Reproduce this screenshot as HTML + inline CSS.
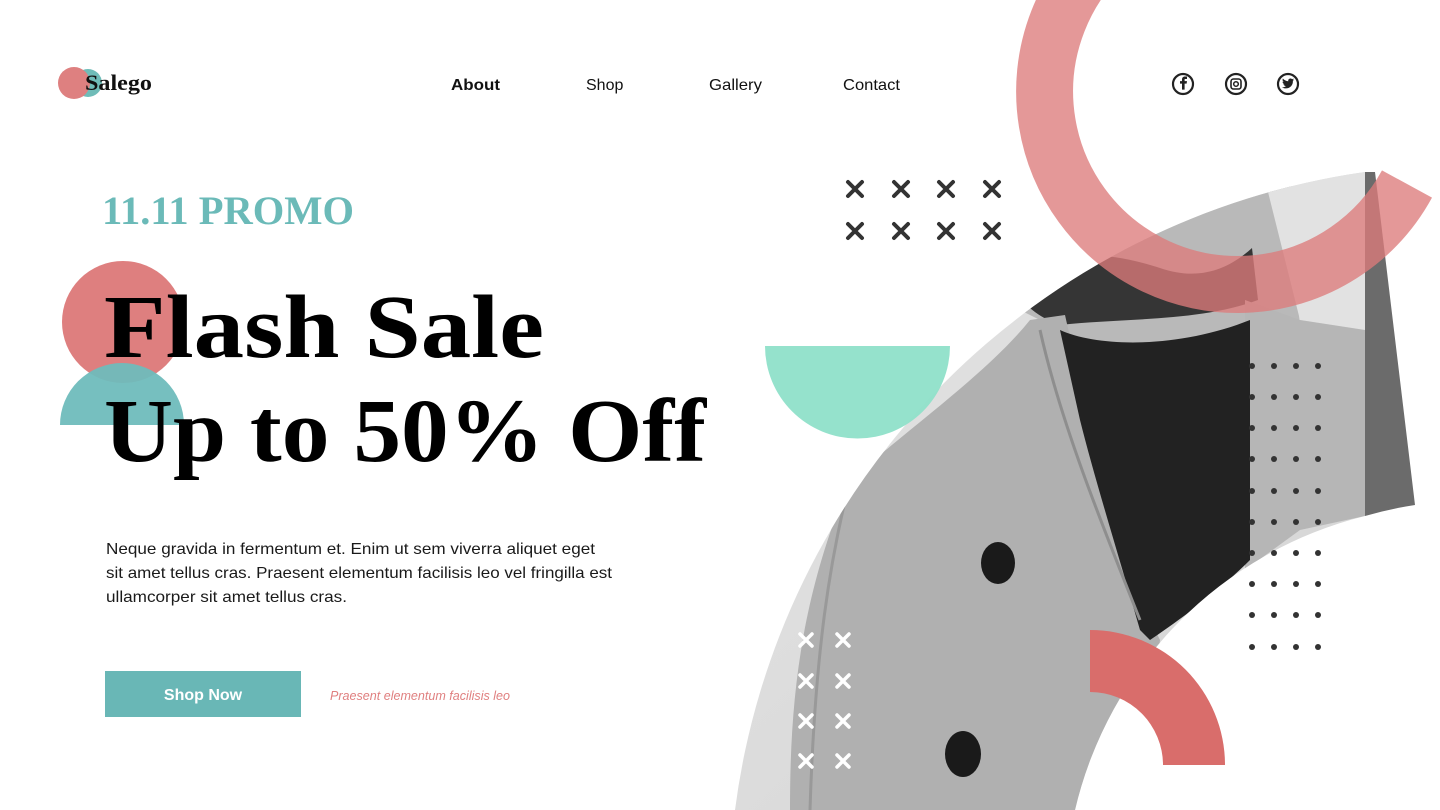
<!DOCTYPE html>
<html><head><meta charset="utf-8"><style>
html,body{margin:0;padding:0;background:#fff;}
body{width:1440px;height:810px;overflow:hidden;position:relative;font-family:"Liberation Sans",sans-serif;}
svg{position:absolute;left:0;top:0;}
</style></head><body>
<svg width="1440" height="810" viewBox="0 0 1440 810" xmlns="http://www.w3.org/2000/svg">
<defs>
<clipPath id="ph"><path d="M735,810 A740,740 0 0 1 1365,172 L1365,516 A396,396 0 0 0 1075,810 Z"/></clipPath>
<linearGradient id="bg" x1="0" y1="0" x2="1" y2="1"><stop offset="0" stop-color="#e6e6e6"/><stop offset="1" stop-color="#d2d2d2"/></linearGradient>
</defs>

<!-- photo -->
<g clip-path="url(#ph)">
<rect x="700" y="160" width="700" height="660" fill="url(#bg)"/>
<!-- face/skin -->
<path d="M960,160 L1290,160 L1300,330 L1240,360 L1100,350 L1000,300 Z" fill="#b9b9b9"/>
<path d="M1260,160 L1365,160 L1365,330 L1300,320 Z" fill="#e2e2e2"/>
<!-- beard -->
<path d="M1012,285 C1040,255 1090,245 1160,268 C1200,282 1230,268 1252,248 L1258,300 C1200,322 1120,318 1060,325 C1040,318 1022,305 1012,285 Z" fill="#353535"/>
<!-- coat -->
<path d="M790,810 C790,700 800,600 850,480 C920,420 990,370 1030,320 L1065,315 L1100,470 L1145,610 L1160,640 L1140,810 Z" fill="#b0b0b0"/>
<path d="M1245,300 L1300,320 L1365,330 L1365,516 L1300,530 L1245,570 Z" fill="#b6b6b6"/>
<!-- turtleneck -->
<path d="M1060,330 C1100,348 1180,348 1250,320 L1250,560 C1220,590 1180,620 1150,640 L1140,630 C1120,560 1095,480 1080,420 Z" fill="#222"/>
<!-- coat seams -->
<path d="M850,480 C830,560 815,650 810,810" stroke="#999" stroke-width="3" fill="none"/>
<path d="M1040,330 C1060,420 1100,520 1140,620" stroke="#8e8e8e" stroke-width="3" fill="none"/>
<!-- buttons -->
<ellipse cx="998" cy="563" rx="17" ry="21" fill="#1a1a1a"/>
<ellipse cx="963" cy="754" rx="18" ry="23" fill="#1a1a1a"/>
</g>
<!-- gray bar -->
<path d="M1365,172 L1375,172 L1415,505 A396,396 0 0 0 1365,516 Z" fill="#6b6b6b"/>

<!-- teal half circle -->
<path d="M765,346 L950,346 A92.5,92.5 0 0 1 765,346 Z" fill="#8fe0c9" opacity="0.95"/>

<!-- pink ring -->
<path d="M1201,-98 A193,193 0 1 0 1407,184" stroke="#dc7b7b" stroke-opacity="0.78" stroke-width="57" fill="none"/>

<!-- red quarter ring -->
<path d="M1090,630 A135,135 0 0 1 1225,765 L1163,765 A73,73 0 0 0 1090,692 Z" fill="#d96d6b"/>

<!-- dark X marks -->
<g stroke="#333" stroke-width="4" stroke-linecap="round">
<path d="M848,182 l14,14 m0,-14 l-14,14"/><path d="M894,182 l14,14 m0,-14 l-14,14"/><path d="M939,182 l14,14 m0,-14 l-14,14"/><path d="M985,182 l14,14 m0,-14 l-14,14"/>
<path d="M848,224 l14,14 m0,-14 l-14,14"/><path d="M894,224 l14,14 m0,-14 l-14,14"/><path d="M939,224 l14,14 m0,-14 l-14,14"/><path d="M985,224 l14,14 m0,-14 l-14,14"/>
</g>
<!-- white X marks -->
<g stroke="#fff" stroke-width="3.5" stroke-linecap="round">
<path d="M800,634 l12,12 m0,-12 l-12,12"/><path d="M837,634 l12,12 m0,-12 l-12,12"/>
<path d="M800,675 l12,12 m0,-12 l-12,12"/><path d="M837,675 l12,12 m0,-12 l-12,12"/>
<path d="M800,715 l12,12 m0,-12 l-12,12"/><path d="M837,715 l12,12 m0,-12 l-12,12"/>
<path d="M800,755 l12,12 m0,-12 l-12,12"/><path d="M837,755 l12,12 m0,-12 l-12,12"/>
</g>
<!-- dots -->
<g fill="#333">
<g id="dr"><circle cx="1252" cy="366" r="3"/><circle cx="1274" cy="366" r="3"/><circle cx="1296" cy="366" r="3"/><circle cx="1318" cy="366" r="3"/></g>
<use href="#dr" y="31"/><use href="#dr" y="62"/><use href="#dr" y="93"/><use href="#dr" y="125"/><use href="#dr" y="156"/><use href="#dr" y="187"/><use href="#dr" y="218"/><use href="#dr" y="249"/><use href="#dr" y="281"/>
</g>

<!-- logo -->
<circle cx="88" cy="83" r="14" fill="#6fbcb8"/>
<circle cx="74" cy="83" r="16" fill="#de8080"/>
<text x="85" y="90" font-family="Liberation Serif, serif" font-weight="bold" font-size="22" fill="#111" textLength="67" lengthAdjust="spacingAndGlyphs">Salego</text>

<!-- nav -->
<g font-family="Liberation Sans, sans-serif" font-size="16" fill="#111">
<text x="451" y="90" font-weight="bold" textLength="49" lengthAdjust="spacingAndGlyphs">About</text>
<text x="586" y="90">Shop</text>
<text x="709" y="90" textLength="53" lengthAdjust="spacingAndGlyphs">Gallery</text>
<text x="843" y="90" textLength="57" lengthAdjust="spacingAndGlyphs">Contact</text>
</g>
<!-- social icons -->
<g fill="none" stroke="#222" stroke-width="2.2">
<circle cx="1183" cy="84" r="10"/>
<circle cx="1236" cy="84" r="10"/>
<circle cx="1288" cy="84" r="10"/>
<rect x="1231" y="79" width="10" height="10" rx="2.5" stroke-width="1.6"/>
<circle cx="1236" cy="84" r="2.3" stroke-width="1.5"/>
</g>
<path d="M1185,79 h2 v-2.5 h-2 c-2,0 -3,1.2 -3,3 v1.6 h-2 v2.5 h2 v6 h2.6 v-6 h2 l0.4,-2.5 h-2.4 v-1.3 c0,-0.6 0.2,-0.8 0.4,-0.8z" fill="#222"/>
<path d="M1294,79.5 c-0.5,0.2 -1,0.4 -1.5,0.4 c0.6,-0.3 1,-0.8 1.2,-1.4 c-0.5,0.3 -1.1,0.5 -1.7,0.6 c-1.2,-1.2 -3.5,-0.6 -3.8,1.2 c0,0.3 0,0.6 0.1,0.9 c-2.2,-0.1 -4.1,-1.100 -5.4,-2.7 c-0.7,1.2 -0.3,2.7 0.8,3.4 c-0.4,0 -0.8,-0.1 -1.2,-0.3 c0,1.3 0.9,2.4 2.1,2.6 c-0.4,0.1 -0.8,0.1 -1.2,0.1 c0.3,1 1.3,1.8 2.5,1.8 c-1.1,0.9 -2.6,1.3 -4,1.1 c5.3,3.3 11.4,-0.4 11,-6.4 c0.5,-0.4 0.9,-0.8 1.1,-1.3z" fill="#222"/>

<!-- hero circles -->
<circle cx="123" cy="322" r="61" fill="#de7f7f"/>
<path d="M60,425 A62,62 0 0 1 184,425 Z" fill="#6fbcbc" opacity="0.95"/>

<!-- promo -->
<text x="102" y="224" font-family="Liberation Serif, serif" font-weight="bold" font-size="40" fill="#6bbab8" textLength="252" lengthAdjust="spacingAndGlyphs">11.11 PROMO</text>
<text x="104" y="357" font-family="Liberation Serif, serif" font-weight="bold" font-size="90" fill="#000" textLength="440" lengthAdjust="spacingAndGlyphs">Flash Sale</text>
<text x="104" y="461" font-family="Liberation Serif, serif" font-weight="bold" font-size="90" fill="#000" textLength="602" lengthAdjust="spacingAndGlyphs">Up to 50% Off</text>

<!-- paragraph -->
<g font-family="Liberation Sans, sans-serif" font-size="16" fill="#1a1a1a">
<text x="106" y="554" textLength="489" lengthAdjust="spacingAndGlyphs">Neque gravida in fermentum et. Enim ut sem viverra aliquet eget</text>
<text x="106" y="578" textLength="506" lengthAdjust="spacingAndGlyphs">sit amet tellus cras. Praesent elementum facilisis leo vel fringilla est</text>
<text x="106" y="602" textLength="241" lengthAdjust="spacingAndGlyphs">ullamcorper sit amet tellus cras.</text>
</g>
<!-- button -->
<rect x="105" y="671" width="196" height="46" fill="#69b7b6"/>
<text x="203" y="700" text-anchor="middle" font-family="Liberation Sans, sans-serif" font-weight="bold" font-size="16" fill="#fff">Shop Now</text>
<text x="330" y="700" font-family="Liberation Sans, sans-serif" font-style="italic" font-size="13" fill="#e08080" textLength="180" lengthAdjust="spacingAndGlyphs">Praesent elementum facilisis leo</text>
</svg>
</body></html>
